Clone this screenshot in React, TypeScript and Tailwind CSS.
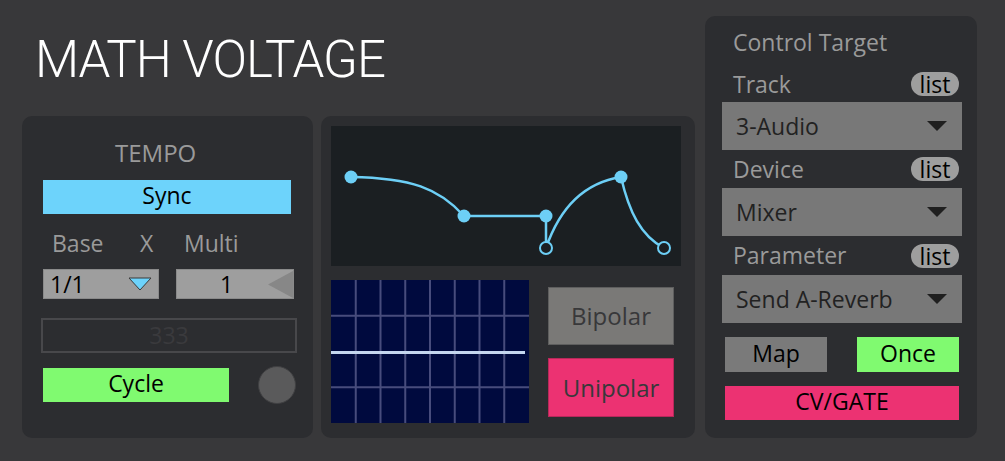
import React from 'react';

const font = { fontFamily: '"Open Sans", "Liberation Sans", sans-serif' };

const ListPill = () => (
  <div className="w-[48px] h-[24px] rounded-full bg-[#9e9e9e] flex items-center justify-center text-[23px] leading-[24px] text-black">
    list
  </div>
);

const Dropdown = ({ label }: { label: string }) => (
  <div className="h-[48px] bg-[#787878] flex items-center justify-between pl-[14px] pr-[15px] text-[23px] text-[#222]">
    <span>{label}</span>
    <svg width="20" height="10" viewBox="0 0 20 10">
      <polygon points="0,0 20,0 10,10" fill="#1f1f1f" />
    </svg>
  </div>
);

const CurveDisplay = () => {
  const pts: [number, number, boolean][] = [
    [20, 51, true],
    [133, 90, true],
    [215, 90, true],
    [215, 122, false],
    [290, 51, true],
    [333, 122, false],
  ];
  return (
    <div className="w-[350px] h-[140px] bg-[#1b1f22]">
      <svg width="350" height="140" viewBox="0 0 350 140">
        <path
          d="M20 51 C 80 52, 108 62, 133 90 L 215 90 L 215 122 C 228 84, 252 57, 290 51 C 298 86, 310 110, 333 122"
          fill="none"
          stroke="#6dcff6"
          strokeWidth="2.5"
        />
        {pts.map(([x, y, filled], i) =>
          filled ? (
            <circle key={i} cx={x} cy={y} r="6.5" fill="#6dcff6" />
          ) : (
            <circle key={i} cx={x} cy={y} r="6" fill="#1b1f22" stroke="#6dcff6" strokeWidth="2" />
          )
        )}
      </svg>
    </div>
  );
};

const Scope = () => {
  const cols = [1, 2, 3, 4, 5, 6, 7];
  const rows = [1, 3];
  return (
    <div className="w-[198px] h-[143px] bg-[#000a3e]">
      <svg width="198" height="143" viewBox="0 0 198 143">
        {cols.map((c) => (
          <line key={c} x1={c * 24.75} y1="0" x2={c * 24.75} y2="143" stroke="#474c7c" strokeWidth="2" />
        ))}
        {rows.map((r) => (
          <line key={r} x1="0" y1={r * 35.75} x2="198" y2={r * 35.75} stroke="#474c7c" strokeWidth="2" />
        ))}
        <line x1="0" y1="72.5" x2="194" y2="72.5" stroke="#c4d6ef" strokeWidth="3" />
      </svg>
    </div>
  );
};

export default function App() {
  return (
    <div className="w-[1005px] h-[461px] bg-[#38383a] flex pl-[22px] pt-[16px] gap-[10px]" style={font}>
      <div className="flex flex-col w-[673px]">
        <div className="h-[100px] pl-[13px] pt-[18px]">
          <h1
            className="text-[51px] leading-none font-light text-white tracking-[-1px]"
            style={{ fontFamily: 'Roboto, "Liberation Sans", sans-serif' }}
          >
            MATH VOLTAGE
          </h1>
        </div>

        <div className="flex gap-[8px] h-[322px]">
          {/* tempo panel */}
          <div className="w-[291px] rounded-[10px] bg-[#2c2d30] flex flex-col pl-[21px]">
            <div className="mt-[20px] h-[34px] leading-[34px] pl-[72px] text-[24px] text-[#9a9a9a]">TEMPO</div>
            <div className="mt-[10px] w-[248px] h-[34px] bg-[#6dd3fb] text-center text-[23px] leading-[31px] text-black">
              Sync
            </div>
            <div className="mt-[12px] h-[35px] leading-[35px] flex text-[23px] text-[#9a9a9a]">
              <span className="w-[97px] pl-[9px]">Base</span>
              <span className="w-[44px]">X</span>
              <span>Multi</span>
            </div>
            <div className="mt-[8px] flex gap-[17px]">
              <div className="w-[116px] h-[30px] bg-[#9e9e9e] border border-[#8a8a8a] flex items-center justify-between pl-[6px] pr-[6px] text-[23px] text-black">
                <span className="leading-[28px]">1/1</span>
                <svg width="24" height="14" viewBox="0 0 24 14">
                  <polygon points="1,1 23,1 12,13" fill="#6dd3fb" stroke="#3a3a3a" strokeWidth="1" />
                </svg>
              </div>
              <div className="w-[118px] h-[30px] bg-[#9e9e9e] border border-[#8a8a8a] flex items-center relative text-[23px] text-black">
                <span className="w-full text-center leading-[28px] pr-[17px]">1</span>
                <svg className="absolute right-0 top-[1px]" width="25" height="27" viewBox="0 0 25 27">
                  <polygon points="0,13.5 25,0 25,27" fill="#878787" />
                </svg>
              </div>
            </div>
            <div className="mt-[19px] -ml-[2px] w-[256px] h-[35px] border-2 border-[#48484b] text-center text-[23px] leading-[30px] text-[#3a3a3d]">
              333
            </div>
            <div className="mt-[13px] flex items-center gap-[29px]">
              <div className="w-[186px] h-[34px] bg-[#80fa70] text-center text-[23px] leading-[31px] text-black">Cycle</div>
              <div className="w-[38px] h-[38px] rounded-full bg-[#5a5a5b] border border-[#404042]" />
            </div>
          </div>

          {/* shape panel */}
          <div className="w-[374px] rounded-[10px] bg-[#2c2d30] flex flex-col pl-[10px] pt-[10px]">
            <CurveDisplay />
            <div className="mt-[14px] flex gap-[19px]">
              <Scope />
              <div className="pt-[7px] flex flex-col gap-[13px]">
                <div className="w-[126px] h-[58px] bg-[#7a7977] border border-[#5e5e5e] flex items-center justify-center text-[24px] text-[#38383a]">
                  Bipolar
                </div>
                <div className="w-[126px] h-[59px] bg-[#ec3272] border border-[#b8285a] flex items-center justify-center text-[24px] text-[#38383a]">
                  Unipolar
                </div>
              </div>
            </div>
          </div>
        </div>
      </div>

      {/* control target panel */}
      <div className="w-[272px] h-[422px] rounded-[10px] bg-[#2c2d30] flex flex-col pl-[17px] pr-[15px]">
        <div className="mt-[7px] h-[38px] leading-[38px] pl-[11px] text-[23px] text-[#9a9a9a]">Control Target</div>
        <div className="mt-[5px] h-[36px] flex items-center justify-between pl-[11px] pr-[3px] text-[23px] text-[#9a9a9a]">
          <span>Track</span>
          <ListPill />
        </div>
        <Dropdown label="3-Audio" />
        <div className="h-[38px] flex items-center justify-between pl-[11px] pr-[3px] text-[23px] text-[#9a9a9a]">
          <span>Device</span>
          <ListPill />
        </div>
        <Dropdown label="Mixer" />
        <div className="h-[39px] flex items-center justify-between pl-[11px] pr-[3px] text-[23px] text-[#9a9a9a]">
          <span>Parameter</span>
          <ListPill />
        </div>
        <Dropdown label="Send A-Reverb" />
        <div className="mt-[14px] px-[3px] flex justify-between">
          <div className="w-[102px] h-[35px] bg-[#7a7a7a] text-center text-[23px] leading-[32px] text-black">Map</div>
          <div className="w-[102px] h-[35px] bg-[#80fa70] text-center text-[23px] leading-[32px] text-black">Once</div>
        </div>
        <div className="mt-[14px] mx-[3px] h-[34px] bg-[#ec3272] text-center text-[23px] leading-[31px] text-black">
          CV/GATE
        </div>
      </div>
    </div>
  );
}
